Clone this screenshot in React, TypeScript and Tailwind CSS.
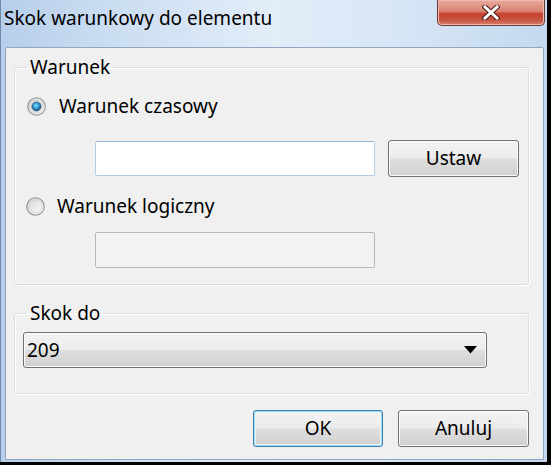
import React from 'react';

const FONT = "font-['Noto_Sans','Liberation_Sans',sans-serif]";

function Radio({ checked }: { checked: boolean }) {
  return (
    <svg width="19" height="19" viewBox="0 0 19 19" className="shrink-0">
      <defs>
        <linearGradient id={checked ? 'ringOn' : 'ringOff'} x1="0" y1="0" x2="1" y2="1">
          <stop offset="0" stopColor="#d4d4d4" />
          <stop offset="1" stopColor="#ffffff" />
        </linearGradient>
        <radialGradient id="dot" cx="0.45" cy="0.4" r="0.6">
          <stop offset="0" stopColor="#8ee3fb" />
          <stop offset="0.45" stopColor="#3aa2d8" />
          <stop offset="1" stopColor="#1b4f7d" />
        </radialGradient>
      </defs>
      <circle cx="9.5" cy="9.5" r="8.8" fill={`url(#${checked ? 'ringOn' : 'ringOff'})`} stroke="#8c9196" strokeWidth="1.1" />
      <circle cx="9.5" cy="9.5" r="6.6" fill="none" stroke="#c9ccd0" strokeWidth="0.8" />
      {checked && <circle cx="9.5" cy="9.5" r="4.6" fill="url(#dot)" stroke="#214a6e" strokeWidth="0.6" />}
    </svg>
  );
}

function Button({ label, width, isDefault }: { label: string; width: string; isDefault?: boolean }) {
  return (
    <div
      className={`${width} flex items-center justify-center rounded-[3px] border text-[19px] leading-none text-black bg-[linear-gradient(to_bottom,#f3f3f3_0%,#ececec_48%,#dedede_52%,#d0d0d0_100%)] ${
        isDefault
          ? 'border-[#3c7fb1] shadow-[inset_0_0_0_1px_#9fd8f5,inset_0_0_0_2px_#e6f5fc]'
          : 'border-[#707070] shadow-[inset_0_0_0_1px_#fbfbfb]'
      }`}
    >
      {label}
    </div>
  );
}

export default function App() {
  return (
    <div className={`w-[551px] h-[465px] bg-black overflow-hidden ${FONT}`}>
      <div className="w-[547px] h-[462px] flex flex-col border-l border-[#6f88a8] bg-[linear-gradient(to_right,#b7cfea_0%,#cfe0f3_25%,#e2edf8_50%,#d6e5f5_75%,#c3d8ef_100%)]">
        {/* Title bar */}
        <div className="h-[47px] flex items-start relative">
          <div className="pl-[3px] pt-[5px] text-[19px] leading-[26px] text-black">Skok warunkowy do elementu</div>
          <div className="absolute left-[436px] top-0 w-[108px] h-[26px] rounded-b-[5px] border border-t-0 border-[#6b3b36] bg-[linear-gradient(to_bottom,#e8a99d_0%,#d98474_45%,#c8412f_55%,#c75543_80%,#d8806c_100%)] shadow-[inset_0_0_0_1px_#f0b9ad] flex items-center justify-center">
            <svg width="18" height="15" viewBox="0 0 18 15">
              <path d="M3 2 L15 13 M15 2 L3 13" stroke="#4a1d18" strokeWidth="5" strokeLinecap="square" />
              <path d="M3 2 L15 13 M15 2 L3 13" stroke="#ffffff" strokeWidth="3" strokeLinecap="square" />
            </svg>
          </div>
        </div>

        {/* Client area */}
        <div className="ml-[4px] w-[539px] h-[413px] border border-[#92a6c0] rounded-t-[2px] bg-[#f0f0f0] px-[8px] pt-[6px] text-[19px] text-black">
          <fieldset className="w-[515px] rounded-[3px] border border-[#d5dfe5] shadow-[inset_1px_1px_0_#ffffff,1px_1px_0_#ffffff] pb-[16px]">
            <legend className="ml-[12px] px-[3px] leading-[26px]">Warunek</legend>
            <div className="mt-[13px] h-[26px] flex items-center pl-[12px]">
              <Radio checked />
              <span className="ml-[13px] leading-[26px]">Warunek czasowy</span>
            </div>
            <div className="mt-[21px] h-[37px] flex items-center pl-[80px]">
              <div className="w-[280px] h-[35px] rounded-[2px] border border-[#b4cce6] border-t-[#95b5d8] bg-white" />
              <div className="ml-[13px] h-[37px] flex">
                <Button label="Ustaw" width="w-[131px]" />
              </div>
            </div>
            <div className="mt-[16px] h-[26px] flex items-center pl-[11px]">
              <Radio checked={false} />
              <span className="ml-[12px] leading-[26px]">Warunek logiczny</span>
            </div>
            <div className="mt-[13px] pl-[80px]">
              <div className="w-[280px] h-[36px] rounded-[2px] border border-[#b5b9bd] bg-[#f2f2f2]" />
            </div>
          </fieldset>

          <fieldset className="mt-[15px] w-[515px] rounded-[3px] border border-[#d5dfe5] shadow-[inset_1px_1px_0_#ffffff,1px_1px_0_#ffffff] pb-[25px]">
            <legend className="ml-[12px] px-[3px] leading-[26px]">Skok do</legend>
            <div className="mt-[6px] ml-[8px] w-[464px] h-[36px] flex items-center rounded-[3px] border border-[#707070] shadow-[inset_0_0_0_1px_#fbfbfb] bg-[linear-gradient(to_bottom,#f3f3f3_0%,#ececec_48%,#dedede_52%,#d0d0d0_100%)] pl-[3px] pr-[9px]">
              <span className="flex-1 leading-none">209</span>
              <svg width="13" height="8" viewBox="0 0 13 8">
                <path d="M0 0 H13 L6.5 7.5 Z" fill="#000000" />
              </svg>
            </div>
          </fieldset>

          <div className="mt-[16px] h-[37px] flex justify-end gap-[15px] w-[515px]">
            <Button label="OK" width="w-[130px]" isDefault />
            <Button label="Anuluj" width="w-[131px]" />
          </div>
        </div>
      </div>
    </div>
  );
}
